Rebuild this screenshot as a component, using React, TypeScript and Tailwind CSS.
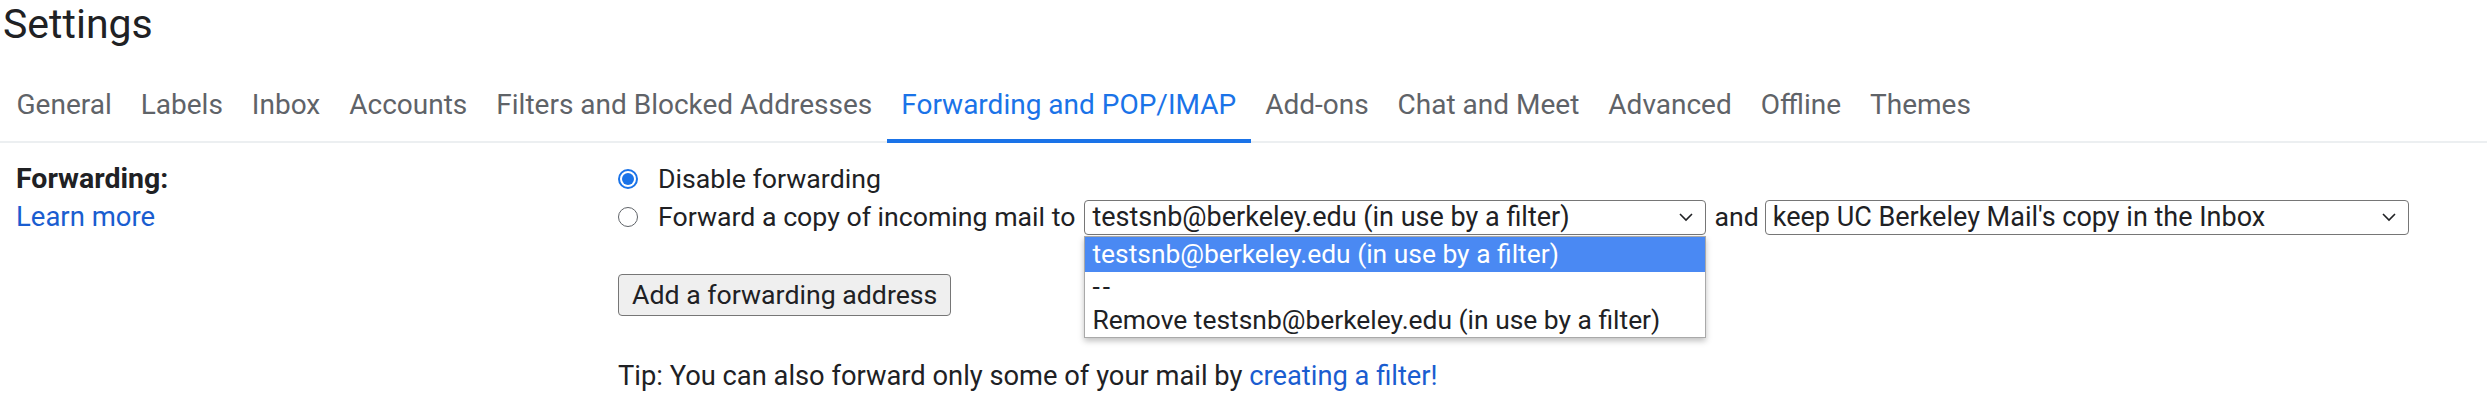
import React from 'react'

const tabs = [
  'General',
  'Labels',
  'Inbox',
  'Accounts',
  'Filters and Blocked Addresses',
  'Forwarding and POP/IMAP',
  'Add-ons',
  'Chat and Meet',
  'Advanced',
  'Offline',
  'Themes',
]

function Chevron() {
  return (
    <svg width="16" height="10" viewBox="0 0 16 10" className="shrink-0">
      <path d="M2 2 L8 8 L14 2" fill="none" stroke="#202124" strokeWidth="1.6" />
    </svg>
  )
}

function Radio({ checked }: { checked?: boolean }) {
  if (checked) {
    return (
      <span className="w-[20px] h-[20px] rounded-full border-2 border-[#1a73e8] flex items-center justify-center shrink-0">
        <span className="w-[12px] h-[12px] rounded-full bg-[#1a73e8]" />
      </span>
    )
  }
  return <span className="w-[20px] h-[20px] rounded-full border-[1.5px] border-[#5f6368] shrink-0" />
}

function FakeSelect({ value, width }: { value: string; width: string }) {
  return (
    <div
      className={`${width} h-[35px] border border-[#767676] rounded-[4px] bg-white flex items-center justify-between pl-[7px] pr-[11px] text-[27px] leading-[33px] text-[#202124]`}
    >
      <span className="whitespace-nowrap">{value}</span>
      <Chevron />
    </div>
  )
}

export default function App() {
  return (
    <div className="w-[2487px] h-[403px] bg-white overflow-hidden" style={{ fontFamily: 'Roboto, "Noto Sans", sans-serif' }}>
      <div className="h-[72px] pt-[1px] pl-[3px] text-[41px] leading-[47px] text-[#202124]">Settings</div>

      <div className="flex items-end border-b-2 border-[#eceff1] pl-[2px]">
        {tabs.map((t) => {
          const active = t === 'Forwarding and POP/IMAP'
          return (
            <div
              key={t}
              className={`px-[14.5px] pt-[16px] pb-[17px] text-[28px] leading-[34px] whitespace-nowrap border-b-4 -mb-[2px] ${
                active ? 'border-[#1a73e8] text-[#1a73e8]' : 'border-transparent text-[#5f6368]'
              }`}
            >
              {t}
            </div>
          )
        })}
      </div>

      <div className="flex pt-[17px] text-[26.7px] leading-[38px] text-[#202124]">
        <div className="w-[618px] pl-[16px] shrink-0">
          <div className="font-bold text-[28.5px]">Forwarding:</div>
          <div className="text-[#1a5dd0] text-[27.5px]">Learn more</div>
        </div>

        <div className="flex flex-col">
          <div className="flex items-center gap-[20px] h-[38px]">
            <Radio checked />
            <span>Disable forwarding</span>
          </div>
          <div className="flex items-center h-[38px]">
            <Radio />
            <span className="ml-[20px] whitespace-nowrap">Forward a copy of incoming mail to</span>
            <div className="relative ml-[9px]">
              <FakeSelect value="testsnb@berkeley.edu (in use by a filter)" width="w-[622px]" />
              <div className="absolute left-0 top-full mt-[1px] w-[622px] bg-white border border-[#a9a9a9] shadow-[0_3px_6px_rgba(0,0,0,0.25)] z-10 text-[26.4px]">
                <div className="h-[35px] leading-[35px] pl-[7px] bg-[#4a89f3] text-white whitespace-nowrap">
                  testsnb@berkeley.edu (in use by a filter)
                </div>
                <div className="h-[32px] leading-[30px] pl-[7px] tracking-[3px]">--</div>
                <div className="h-[33px] leading-[33px] pl-[7px] whitespace-nowrap">
                  Remove testsnb@berkeley.edu (in use by a filter)
                </div>
              </div>
            </div>
            <span className="ml-[8px]">and</span>
            <div className="ml-[6px]">
              <FakeSelect value="keep UC Berkeley Mail's copy in the Inbox" width="w-[644px]" />
            </div>
          </div>

          <div className="mt-[38px]">
            <button className="h-[42px] px-[13px] bg-[#efefef] border border-[#767676] rounded-[4px] text-[26.7px] leading-[40px] text-[#202124]">
              Add a forwarding address
            </button>
          </div>

          <div className="mt-[41px] whitespace-nowrap text-[27.3px]">
            Tip: You can also forward only some of your mail by{' '}
            <span className="text-[#1a5dd0]">creating a filter!</span>
          </div>
        </div>
      </div>
    </div>
  )
}
